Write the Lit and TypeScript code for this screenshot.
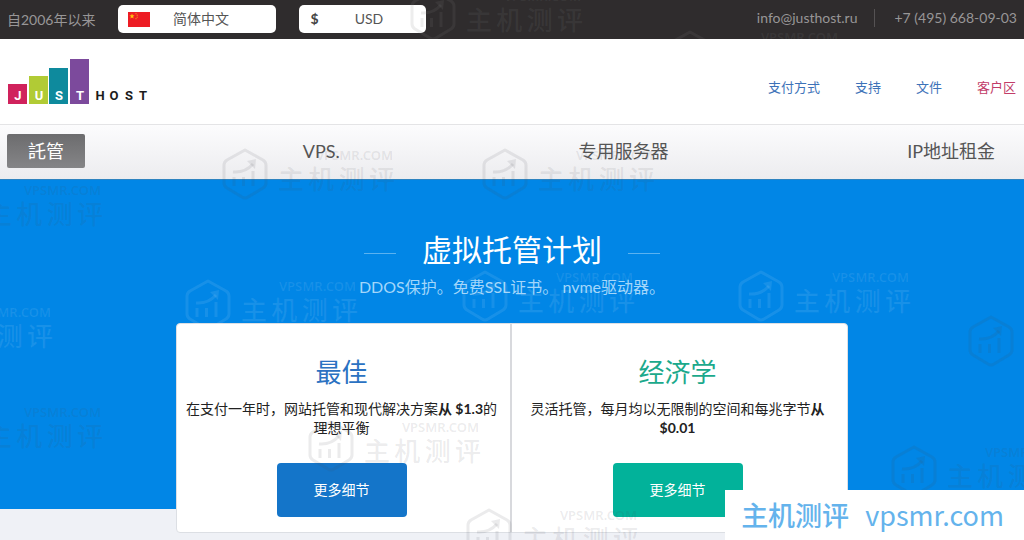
import { LitElement, html, css, svg } from "lit";
import { customElement, property } from "lit/decorators.js";

type Tone = "dark" | "light" | "faint";
interface StampSpot { x: number; y: number; tone: Tone; }

const TOP_STAMPS: StampSpot[] = [
  { x: 410, y: -11, tone: "faint" },
  { x: 667, y: 30, tone: "faint" },
];

const PAGE_STAMPS: StampSpot[] = [
  { x: 222, y: 148, tone: "dark" },
  { x: 482, y: 148, tone: "dark" },
  { x: -70, y: 183, tone: "dark" },
  { x: 185, y: 279, tone: "light" },
  { x: 462, y: 270, tone: "light" },
  { x: 738, y: 270, tone: "light" },
  { x: -120, y: 305, tone: "light" },
  { x: 968, y: 315, tone: "dark" },
  { x: -70, y: 405, tone: "dark" },
  { x: 308, y: 420, tone: "dark" },
  { x: 891, y: 445, tone: "dark" },
  { x: 466, y: 508, tone: "dark" },
];

const LOGO_BARS = [
  { x: 0, y: 25, fill: "#d0225c", letter: "J" },
  { x: 21, y: 17, fill: "#b1cb35", letter: "U" },
  { x: 41, y: 9, fill: "#0e8a9d", letter: "S" },
  { x: 62, y: 0, fill: "#7c4a9c", letter: "T" },
];

const LOGO_TAIL = [
  { x: 92, letter: "H" },
  { x: 106, letter: "O" },
  { x: 121, letter: "S" },
  { x: 135, letter: "T" },
];

@customElement("water-stamp")
export class WaterStamp extends LitElement {
  @property({ reflect: true }) tone: Tone = "dark";

  static styles = css`
    :host { display: flex; gap: 10px; width: 171px; color: rgba(70, 70, 80, 0.11); }
    :host([tone="light"]) { color: rgba(255, 255, 255, 0.09); }
    :host([tone="faint"]) { color: rgba(125, 125, 125, 0.14); }
    svg { flex: none; width: 46px; height: 52px; }
    .words { flex: 1; text-align: right; white-space: nowrap; }
    .site { font: 600 13px/14px "Noto Sans", sans-serif; }
    .name {
      display: flex; justify-content: space-between;
      font: 500 26px/32px "Noto Sans CJK SC", sans-serif;
      margin-right: -2px;
    }
  `;

  render() {
    return html`
      <svg viewBox="0 0 46 52" fill="none" stroke="currentColor" stroke-linejoin="round">
        <path stroke-width="3" d="M23 2 L41 12 Q44 14 44 17 V35 Q44 38 41 40 L26 49 Q23 51 20 49 L5 40 Q2 38 2 35 V17 Q2 14 5 12 Z" />
        <path stroke-width="3" d="M11 24 Q23 25 31 16 M12 29 V38 M21.500 29 V38 M31 23 V38" />
        <path fill="currentColor" stroke="none" d="M25 13 L34 11 L33 21 Z" />
      </svg>
      <div class="words">
        <div class="site">VPSMR.COM</div>
        <div class="name">${[..."主机测评"].map((c) => html`<span>${c}</span>`)}</div>
      </div>
    `;
  }
}

@customElement("app-root")
export class AppRoot extends LitElement {
  static styles = css`
    :host {
      display: block; position: relative; box-sizing: border-box;
      min-height: 100vh; max-height: 100vh; overflow: hidden;
      background: #eff1f6; color: #222;
      font: 14px/18px Lato, "Noto Sans CJK SC", sans-serif;
    }
    * { box-sizing: border-box; }
    a { color: inherit; text-decoration: none; }
    h1, h2, p { margin: 0; font-weight: 400; }

    .topbar {
      position: relative; overflow: hidden;
      display: flex; align-items: center; gap: 23px;
      height: 39px; padding: 0 7px; background: #2f2c2d; color: #989697;
    }
    .picker {
      display: flex; align-items: center; height: 28px; margin-bottom: 1px;
      border-radius: 5px; background: #fff; color: #444;
    }
    .language { width: 158px; padding: 0 25px 0 10px; }
    .currency { width: 127px; padding: 0 8px 0 10px; }
    .picker svg { flex: none; width: 22px; height: 15px; }
    .sign { font-weight: 700; width: 10px; text-align: center; }
    .picker select {
      flex: 1; min-width: 0; appearance: none; border: 0; padding: 0; background: none;
      font: inherit; color: #555; text-align: center; text-align-last: center;
    }
    .contacts { display: flex; margin-left: auto; margin-bottom: 4px; }
    .contacts a + a { margin-left: 16px; padding-left: 20px; border-left: 1px solid #555253; }

    .header {
      display: flex; align-items: center; justify-content: space-between;
      height: 86px; padding: 0 8px; background: #fff; border-bottom: 1px solid #e4e4e6;
    }
    .logo { display: block; width: 140px; height: 45px; }
    .logo svg { display: block; }
    .logo text { font: 700 13px Roboto, sans-serif; text-anchor: middle; }
    .links { display: flex; gap: 35px; padding-top: 10px; font-size: 13px; color: #3d72b8; }
    .client { color: #c23c68; }

    .nav {
      display: flex; align-items: center; justify-content: space-between;
      height: 54px; padding: 0 8px 2px 7px;
      background: linear-gradient(#fcfcfd, #ececef);
      font-size: 18px; line-height: 34px; color: #555;
    }
    .nav a { padding: 0 21px; border-radius: 2px; }
    .nav .active { background: linear-gradient(#6c6c6e, #858587); color: #fff; }

    .hero {
      height: 330px; padding-top: 49px; border-top: 1px solid #2d83c0;
      background: #0186e6; text-align: center;
    }
    .title { display: flex; align-items: center; justify-content: center; gap: 26px; color: #fff; }
    .title h1 { font-size: 30px; line-height: 40px; }
    .rule { width: 32px; height: 1px; margin-top: 8px; background: #5bb2f0; }
    .sub { font-size: 16px; line-height: 24px; margin-top: 6px; color: #a3d6fa; }

    .plans {
      display: grid; grid-template-columns: 1fr 1fr;
      width: min(672px, 100%); margin: 24px auto 0;
      background: #fff; border: 1px solid #dcdfe4; border-radius: 4px; color: #222;
    }
    .plan { padding: 28px 12px 15px 8px; }
    .plan:first-child { border-right: 2px solid #d8d9dd; }
    .plan h2 { font-size: 26px; line-height: 40px; color: #2b72c2; }
    .plan.eco h2 { color: #1ba98c; }
    .plan p { margin-top: 7px; line-height: 19px; }
    .more {
      margin-top: 26px; width: 130px; height: 54px; border: 0; border-radius: 4px;
      background: #1475c9; color: #fff; font: inherit;
    }
    .eco .more { background: #02b29a; }

    .layer { position: absolute; inset: 0; overflow: hidden; pointer-events: none; }
    .layer water-stamp { position: absolute; }
    .badge {
      position: absolute; right: 0; bottom: 0; display: flex; align-items: center; gap: 16px;
      height: 50px; padding: 0 20px 0 16px; background: #fff; color: #64b3ec;
      font: 500 27px/40px "Noto Sans CJK SC", sans-serif;
    }
    .badge .domain { font-weight: 400; }
  `;

  private stamps(list: StampSpot[]) {
    return html`<div class="layer" aria-hidden="true">
      ${list.map((s) => html`<water-stamp tone=${s.tone} style="left:${s.x}px;top:${s.y}px"></water-stamp>`)}
    </div>`;
  }

  render() {
    return html`
      <div class="topbar">
        <span>自2006年以来</span>
        <label class="picker language">
          <svg viewBox="0 0 22 15" aria-hidden="true">
            <rect width="22" height="15" fill="#ed1c24" />
            <path fill="#ffc20e" d="M4 1.500 L4.700 3.300 L6.600 3.400 L5.100 4.600 L5.600 6.400 L4 5.400 L2.400 6.400 L2.900 4.600 L1.400 3.400 L3.300 3.300 Z" />
            <g fill="#f79a1e"><circle cx="8" cy="1.700" r=".6" /><circle cx="9.200" cy="3.200" r=".6" /><circle cx="9.200" cy="5.200" r=".6" /><circle cx="8" cy="6.700" r=".6" /></g>
          </svg>
          <select aria-label="语言"><option>简体中文</option></select>
        </label>
        <label class="picker currency">
          <span class="sign">$</span>
          <select aria-label="货币"><option>USD</option></select>
        </label>
        <div class="contacts">
          <a href="mailto:info@justhost.ru">info@justhost.ru</a>
          <a href="tel:+74956680903">+7 (495) 668-09-03</a>
        </div>
        ${this.stamps(TOP_STAMPS)}
      </div>

      <header class="header">
        <a class="logo" href="#" aria-label="JustHost">
          <svg viewBox="0 0 140 45" width="140" height="45">
            ${LOGO_BARS.map((b) => svg`
              <rect x=${b.x} y=${b.y} width="19" height=${45 - b.y} fill=${b.fill} />
              <text x=${b.x + 10} y="41" fill="#fff">${b.letter}</text>`)}
            ${LOGO_TAIL.map((l) => svg`<text x=${l.x} y="41" fill="#1c1c1c">${l.letter}</text>`)}
          </svg>
        </a>
        <div class="links">
          <a href="#">支付方式</a>
          <a href="#">支持</a>
          <a href="#">文件</a>
          <a class="client" href="#">客户区</a>
        </div>
      </header>

      <nav class="nav">
        <a class="active" href="#">託管</a>
        <a href="#">VPS.</a>
        <a href="#">专用服务器</a>
        <a href="#">IP地址租金</a>
      </nav>

      <main class="hero">
        <div class="title"><span class="rule"></span><h1>虚拟托管计划</h1><span class="rule"></span></div>
        <p class="sub">DDOS保护。免费SSL证书。 nvme驱动器。</p>
        <div class="plans">
          <section class="plan">
            <h2>最佳</h2>
            <p>在支付一年时，网站托管和现代解决方案<b>从 $1.3</b>的理想平衡</p>
            <button class="more">更多细节</button>
          </section>
          <section class="plan eco">
            <h2>经济学</h2>
            <p>灵活托管，每月均以无限制的空间和每兆字节<b>从 $0.01</b></p>
            <button class="more">更多细节</button>
          </section>
        </div>
      </main>

      ${this.stamps(PAGE_STAMPS)}
      <div class="badge"><span>主机测评</span><span class="domain">vpsmr.com</span></div>
    `;
  }
}
